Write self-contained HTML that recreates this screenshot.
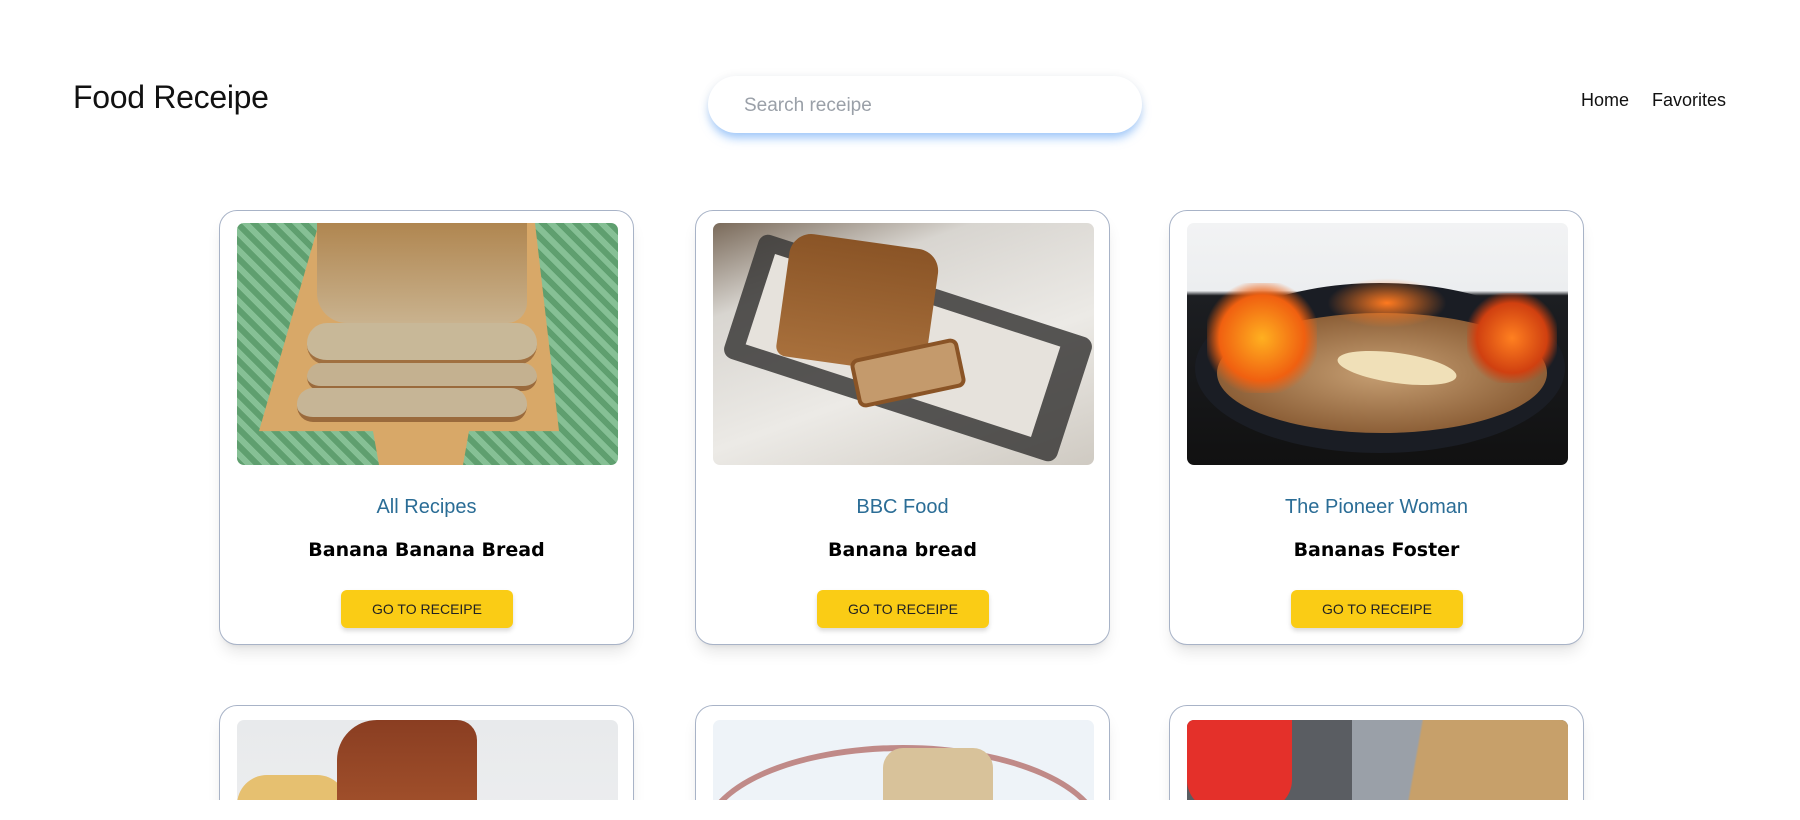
<!DOCTYPE html>
<html><head><meta charset="utf-8"><style>
*{box-sizing:border-box;margin:0;padding:0}
html,body{width:1800px;height:820px;background:#fff;overflow:hidden;font-family:"Liberation Sans",sans-serif}
#wrap{position:absolute;left:0;top:0;width:1800px;height:800px;overflow:hidden}
.logo{position:absolute;left:73px;top:79px;font-size:32px;color:#111;letter-spacing:-0.3px}
.search{position:absolute;left:708px;top:76px;width:434px;height:57px;border-radius:29px;background:#fff;box-shadow:0 7px 10px -2px rgba(96,165,250,.6),0 0 10px rgba(0,0,0,.06);}
.search span{position:absolute;left:36px;top:19px;font-size:19px;color:#9aa0a8}
.nav{position:absolute;top:90px;font-size:18px;color:#111}
.card{position:absolute;width:415px;height:435px;border:1px solid #a8b3c7;border-radius:18px;background:#fff;box-shadow:0 10px 15px -3px rgba(0,0,0,.1),0 4px 6px -4px rgba(0,0,0,.1)}
.img{position:absolute;left:17px;top:12px;width:381px;height:242px;border-radius:7px;overflow:hidden}
.img div{position:absolute}
.src{position:absolute;top:285px;width:100%;text-align:center;font-size:20px;color:#2b6d96}
.ttl{position:absolute;top:328px;width:100%;text-align:center;font-family:"DejaVu Sans",sans-serif;font-weight:bold;font-size:19px;color:#000}
.btn{position:absolute;left:121px;top:379px;width:172px;height:38px;border-radius:6px;background:#facc15;box-shadow:0 3px 5px rgba(0,0,0,.15);text-align:center;line-height:38px;font-size:14px;color:#222}
</style></head><body><div id="wrap">
<div class="logo">Food Receipe</div>
<div class="search"><span>Search receipe</span></div>
<div class="nav" style="left:1581px">Home</div>
<div class="nav" style="left:1652px">Favorites</div>

<div class="card" style="left:219px;top:210px">
 <div class="img" style="background:repeating-linear-gradient(45deg,#5f9f6f 0 6px,#86c095 6px 12px)">
  <div style="left:22px;top:0;width:300px;height:242px;background:#d8a868;border-radius:0 0 20px 20px;clip-path:polygon(20% 0,92% 0,100% 86%,70% 86%,68% 100%,40% 100%,38% 86%,0 86%)"></div>
  <div style="left:80px;top:0;width:210px;height:100px;background:linear-gradient(#b08650,#c9b28e);border-radius:0 0 20px 30px"></div>
  <div style="left:70px;top:100px;width:230px;height:42px;background:#c8b898;border-radius:20px;border-bottom:5px solid #a07040"></div>
  <div style="left:70px;top:140px;width:230px;height:28px;background:#c4b190;border-radius:14px;border-bottom:5px solid #9a6a3c"></div>
  <div style="left:60px;top:165px;width:230px;height:34px;background:#c6b596;border-radius:16px;border-bottom:5px solid #9a6a3c"></div>
 </div>
 <div class="src">All Recipes</div><div class="ttl">Banana Banana Bread</div><div class="btn">GO TO RECEIPE</div>
</div>

<div class="card" style="left:695px;top:210px">
 <div class="img" style="background:linear-gradient(160deg,#7a6a5a 0%,#d8d5d0 25%,#eceae6 60%,#cfcac2 100%)">
  <div style="left:20px;top:60px;width:350px;height:130px;background:#3b3a38;transform:rotate(18deg);border-radius:10px;opacity:.85"></div>
  <div style="left:40px;top:75px;width:300px;height:95px;background:#e6e2dc;transform:rotate(18deg)"></div>
  <div style="left:70px;top:18px;width:150px;height:125px;background:linear-gradient(#8a5426,#a8703c);border-radius:22px 22px 10px 10px;transform:rotate(8deg)"></div>
  <div style="left:140px;top:125px;width:110px;height:50px;background:#c49a6c;border-radius:8px;transform:rotate(-12deg);border:4px solid #8a5426"></div>
 </div>
 <div class="src">BBC Food</div><div class="ttl">Banana bread</div><div class="btn">GO TO RECEIPE</div>
</div>

<div class="card" style="left:1169px;top:210px">
 <div class="img" style="background:linear-gradient(#f2f3f4 0%,#eceef0 28%,#1c1e22 30%,#111 100%)">
  <div style="left:8px;top:60px;width:370px;height:170px;border-radius:50%;background:#1a1d24"></div>
  <div style="left:30px;top:90px;width:330px;height:120px;border-radius:50%;background:radial-gradient(#c7a074,#8d6038 70%,#5a3a20)"></div>
  <div style="left:150px;top:130px;width:120px;height:30px;border-radius:50%;background:#f0e0b8;transform:rotate(8deg)"></div>
  <div style="left:20px;top:60px;width:110px;height:110px;background:radial-gradient(#ffb020,#f06010 55%,transparent 75%)"></div>
  <div style="left:280px;top:70px;width:90px;height:90px;background:radial-gradient(#ff8020,#d04010 55%,transparent 75%)"></div>
  <div style="left:140px;top:55px;width:120px;height:50px;background:radial-gradient(#ff7a20,transparent 70%)"></div>
 </div>
 <div class="src">The Pioneer Woman</div><div class="ttl">Bananas Foster</div><div class="btn">GO TO RECEIPE</div>
</div>

<div class="card" style="left:219px;top:705px">
 <div class="img" style="top:14px;background:linear-gradient(#e8eaec,#f2f2f2)">
  <div style="left:0;top:55px;width:110px;height:60px;background:#e6c070;border-radius:30px"></div>
  <div style="left:100px;top:0;width:140px;height:120px;background:linear-gradient(#8a3e22,#a9562e);border-radius:40px 20px 0 0"></div>
 </div>
</div>
<div class="card" style="left:695px;top:705px">
 <div class="img" style="top:14px;background:#eef3f8">
  <div style="left:-10px;top:25px;width:400px;height:180px;border-radius:50%;border:6px solid #c08a88"></div>
  <div style="left:170px;top:28px;width:110px;height:80px;background:#d8c29a;border-radius:20px"></div>
 </div>
</div>
<div class="card" style="left:1169px;top:705px">
 <div class="img" style="top:14px;background:#5a5d62">
  <div style="left:0;top:0;width:105px;height:90px;background:#e4302a;border-radius:0 0 30px 30px"></div>
  <div style="left:165px;top:0;width:216px;height:90px;background:linear-gradient(100deg,#9aa0a8 30%,#c7a06a 31%)"></div>
 </div>
</div>
</div></body></html>
